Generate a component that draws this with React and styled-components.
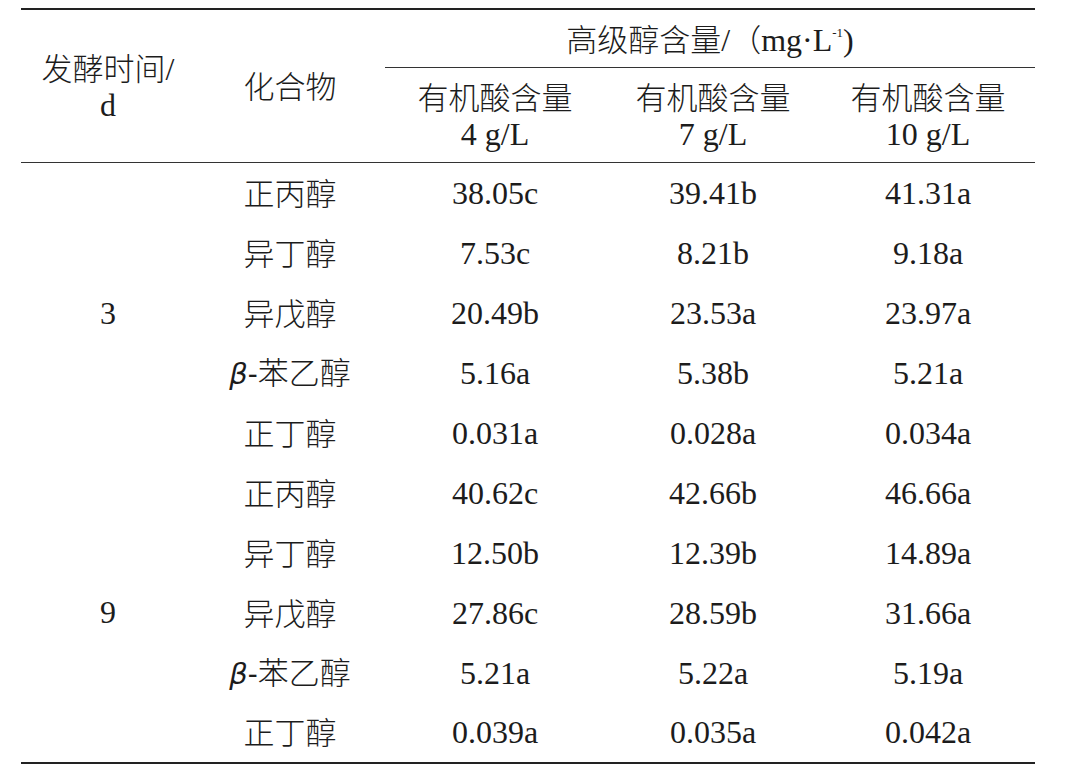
import React from "react";
import styled, { createGlobalStyle } from "styled-components";

const Global = createGlobalStyle`
  html, body { margin: 0; padding: 0; background: #ffffff; }
  body { font-family: "Liberation Serif", serif; color: #1c1c1c; }
`;

const Page = styled.div`
  width: 1066px;
  height: 776px;
  padding: 8px 31px 0 21px;
  box-sizing: border-box;
`;

const Table = styled.table`
  width: 1014px;
  border-collapse: collapse;
  table-layout: fixed;
  font-family: "Liberation Serif", serif;
  font-size: 32px;
  font-weight: 400;
  border-top: 2.5px solid #222;
  border-bottom: 2.5px solid #222;
`;

const Head = styled.thead`
  border-bottom: 1.5px solid #333;
`;

const HeadCell = styled.th`
  font-weight: 400;
  text-align: center;
  vertical-align: middle;
  padding: 0;
  line-height: 36px;
  height: ${(p) => p.$h || "auto"};
  border-bottom: ${(p) => (p.$rule ? "1.5px solid #333" : "none")};
`;

const Row = styled.tr`
  height: 60px;
`;

const Cell = styled.td`
  text-align: center;
  vertical-align: middle;
  padding: 0;
  line-height: 36px;
  white-space: nowrap;
`;

const Han = styled.span`
  font-family: "Noto Sans CJK SC", sans-serif;
  font-size: 31px;
  font-weight: 300;
`;

const Beta = styled.span`
  font-family: "DejaVu Sans", "Liberation Sans", sans-serif;
  font-style: italic;
  font-size: 29px;
`;

const Dash = styled.span`
  font-family: "Liberation Sans", sans-serif;
  font-size: 30px;
`;

const Sup = styled.sup`
  font-size: 13px;
  vertical-align: 14px;
  line-height: 0;
`;

const groups = [
  {
    day: "3",
    rows: [
      ["正丙醇", "38.05c", "39.41b", "41.31a"],
      ["异丁醇", "7.53c", "8.21b", "9.18a"],
      ["异戊醇", "20.49b", "23.53a", "23.97a"],
      ["β", "5.16a", "5.38b", "5.21a"],
      ["正丁醇", "0.031a", "0.028a", "0.034a"],
    ],
  },
  {
    day: "9",
    rows: [
      ["正丙醇", "40.62c", "42.66b", "46.66a"],
      ["异丁醇", "12.50b", "12.39b", "14.89a"],
      ["异戊醇", "27.86c", "28.59b", "31.66a"],
      ["β", "5.21a", "5.22a", "5.19a"],
      ["正丁醇", "0.039a", "0.035a", "0.042a"],
    ],
  },
];

const Compound = ({ name }) =>
  name === "β" ? (
    <>
      <Beta>β</Beta>
      <Dash>-</Dash>
      <Han>苯乙醇</Han>
    </>
  ) : (
    <Han>{name}</Han>
  );

export default function App() {
  return (
    <Page>
      <Global />
      <Table>
        <colgroup>
          <col style={{ width: 174 }} />
          <col style={{ width: 190 }} />
          <col style={{ width: 220 }} />
          <col style={{ width: 216 }} />
          <col style={{ width: 214 }} />
        </colgroup>
        <Head>
          <tr>
            <HeadCell rowSpan={2}>
              <Han>发酵时间</Han>/
              <br />d
            </HeadCell>
            <HeadCell rowSpan={2}>
              <Han>化合物</Han>
            </HeadCell>
            <HeadCell colSpan={3} $h="57px" $rule>
              <Han>高级醇含量</Han>/<Han>（</Han>mg·L<Sup>-1</Sup>)
            </HeadCell>
          </tr>
          <tr>
            <HeadCell $h="94px">
              <Han>有机酸含量</Han>
              <br />4 g/L
            </HeadCell>
            <HeadCell>
              <Han>有机酸含量</Han>
              <br />7 g/L
            </HeadCell>
            <HeadCell>
              <Han>有机酸含量</Han>
              <br />
              10 g/L
            </HeadCell>
          </tr>
        </Head>
        <tbody>
          {groups.map((g) =>
            g.rows.map((r, i) => (
              <Row key={g.day + i}>
                {i === 0 && <Cell rowSpan={5}>{g.day}</Cell>}
                <Cell>
                  <Compound name={r[0]} />
                </Cell>
                <Cell>{r[1]}</Cell>
                <Cell>{r[2]}</Cell>
                <Cell>{r[3]}</Cell>
              </Row>
            ))
          )}
        </tbody>
      </Table>
    </Page>
  );
}
